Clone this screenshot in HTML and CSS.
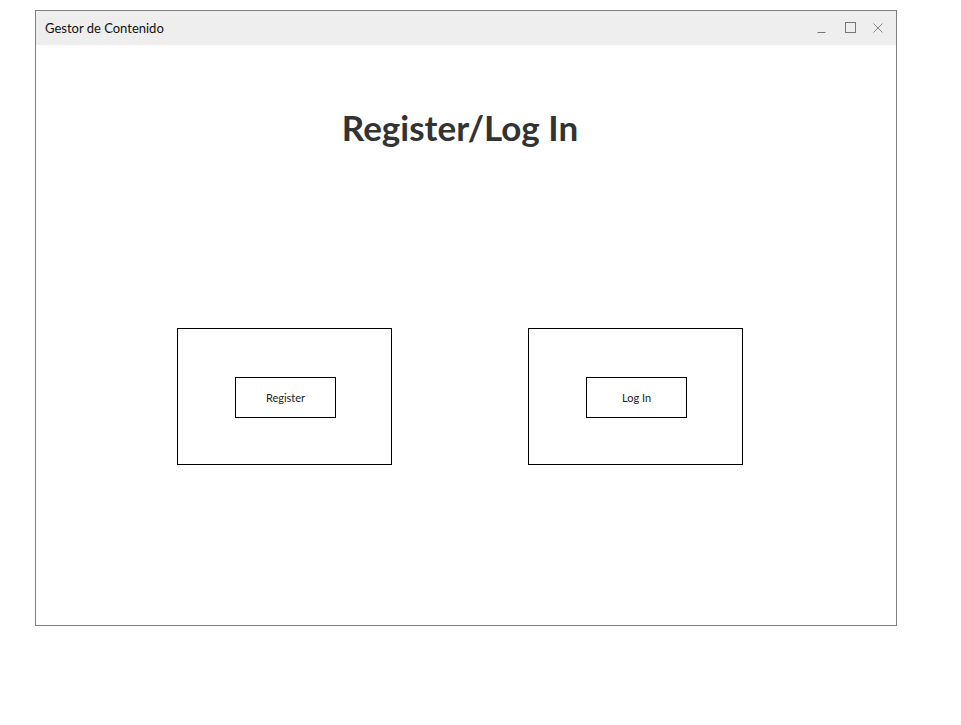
FILE: index.html
```html
<!DOCTYPE html>
<html>
<head>
<meta charset="utf-8">
<link rel="stylesheet" href="styles.css">
</head>
<body>
<div class="window">
  <div class="titlebar">
    <span class="title">Gestor de Contenido</span>
    <div class="controls">
      <svg class="ctl" width="12" height="12" viewBox="0 0 12 12"><path d="M1.5 10.5h8" stroke="#777" stroke-width="1" fill="none"/></svg>
      <svg class="ctl" width="12" height="12" viewBox="0 0 12 12"><rect x="1.5" y="0.5" width="10" height="10" stroke="#777" stroke-width="1" fill="none"/></svg>
      <svg class="ctl" width="12" height="12" viewBox="0 0 12 12"><path d="M1.5 1.5l9 9M10.5 1.5l-9 9" stroke="#888" stroke-width="1" fill="none"/></svg>
    </div>
  </div>
  <div class="content">
    <h1 class="heading">Register/Log In</h1>
    <div class="boxes">
      <div class="box"><div class="btn">Register</div></div>
      <div class="box"><div class="btn">Log In</div></div>
    </div>
  </div>
</div>
</body>
</html>
```
FILE: styles.css
```css
* { box-sizing: border-box; }
html, body { margin: 0; padding: 0; background: #fff; }
body { font-family: "Lato", "Open Sans", sans-serif; }
.window {
  margin: 10px 0 0 35px;
  width: 862px;
  height: 616px;
  border: 1px solid #808080;
  display: flex;
  flex-direction: column;
}
.titlebar {
  height: 34px;
  background: #eeeeee;
  display: flex;
  align-items: center;
  justify-content: space-between;
  padding: 0 12px 0 9px;
}
.title { font-size: 13px; color: #111; }
.controls { display: flex; gap: 16px; align-items: center; }
.ctl { display: block; }
.content { flex: 1; display: flex; flex-direction: column; }
.heading {
  margin: 60px 0 0 0;
  padding-right: 12px;
  text-align: center;
  font-size: 35px;
  font-weight: 700;
  color: #333;
  line-height: 44px;
}
.boxes {
  display: flex;
  gap: 136px;
  padding-left: 141px;
  margin-top: 179px;
}
.box {
  width: 215px;
  height: 137px;
  border: 1px solid #000;
  padding: 1px 0 0 2px;
  display: flex;
  align-items: center;
  justify-content: center;
}
.btn {
  width: 101px;
  height: 41px;
  border: 1px solid #000;
  display: flex;
  align-items: center;
  justify-content: center;
  font-size: 11px;
  color: #222;
}
```
